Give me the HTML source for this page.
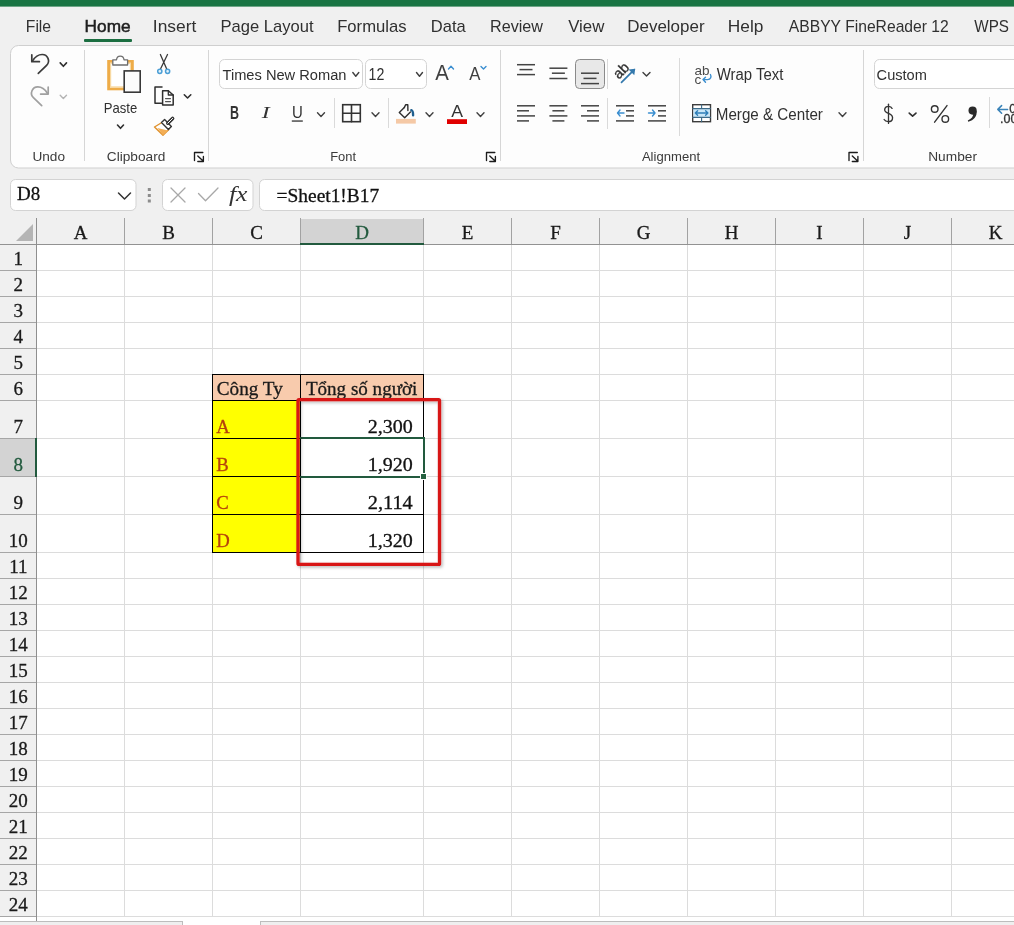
<!DOCTYPE html>
<html><head><meta charset="utf-8"><title>Excel</title>
<style>html,body{margin:0;padding:0;width:1014px;height:925px;overflow:hidden;background:#f0f0f0;}svg{display:block;will-change:transform}</style>
</head><body>
<svg width="1014" height="925" viewBox="0 0 1014 925" shape-rendering="geometricPrecision"><rect x="0" y="0" width="1014" height="925" fill="#f0f0f0" />
<rect x="0" y="0" width="1014" height="6.6" fill="#197443" />
<text x="25.8" y="32" font-family="'Liberation Sans', sans-serif" font-size="17" fill="#303030" font-weight="normal" font-style="normal" text-anchor="start" textLength="25.3" lengthAdjust="spacingAndGlyphs" >File</text>
<text x="84.6" y="32" font-family="'Liberation Sans', sans-serif" font-size="17" fill="#202020" font-weight="normal" font-style="normal" text-anchor="start" textLength="46" lengthAdjust="spacingAndGlyphs"  stroke="#202020" stroke-width="0.5">Home</text>
<text x="152.8" y="32" font-family="'Liberation Sans', sans-serif" font-size="17" fill="#303030" font-weight="normal" font-style="normal" text-anchor="start" textLength="43.5" lengthAdjust="spacingAndGlyphs" >Insert</text>
<text x="220.5" y="32" font-family="'Liberation Sans', sans-serif" font-size="17" fill="#303030" font-weight="normal" font-style="normal" text-anchor="start" textLength="93" lengthAdjust="spacingAndGlyphs" >Page Layout</text>
<text x="337.2" y="32" font-family="'Liberation Sans', sans-serif" font-size="17" fill="#303030" font-weight="normal" font-style="normal" text-anchor="start" textLength="69.4" lengthAdjust="spacingAndGlyphs" >Formulas</text>
<text x="430.8" y="32" font-family="'Liberation Sans', sans-serif" font-size="17" fill="#303030" font-weight="normal" font-style="normal" text-anchor="start" textLength="34.9" lengthAdjust="spacingAndGlyphs" >Data</text>
<text x="490" y="32" font-family="'Liberation Sans', sans-serif" font-size="17" fill="#303030" font-weight="normal" font-style="normal" text-anchor="start" textLength="53" lengthAdjust="spacingAndGlyphs" >Review</text>
<text x="568.2" y="32" font-family="'Liberation Sans', sans-serif" font-size="17" fill="#303030" font-weight="normal" font-style="normal" text-anchor="start" textLength="36.2" lengthAdjust="spacingAndGlyphs" >View</text>
<text x="627.2" y="32" font-family="'Liberation Sans', sans-serif" font-size="17" fill="#303030" font-weight="normal" font-style="normal" text-anchor="start" textLength="77.4" lengthAdjust="spacingAndGlyphs" >Developer</text>
<text x="727.8" y="32" font-family="'Liberation Sans', sans-serif" font-size="17" fill="#303030" font-weight="normal" font-style="normal" text-anchor="start" textLength="35.6" lengthAdjust="spacingAndGlyphs" >Help</text>
<text x="788.8" y="32" font-family="'Liberation Sans', sans-serif" font-size="17" fill="#303030" font-weight="normal" font-style="normal" text-anchor="start" textLength="160" lengthAdjust="spacingAndGlyphs" >ABBYY FineReader 12</text>
<text x="974.3" y="32" font-family="'Liberation Sans', sans-serif" font-size="17" fill="#303030" font-weight="normal" font-style="normal" text-anchor="start" textLength="34.7" lengthAdjust="spacingAndGlyphs" >WPS</text>
<rect x="84" y="39" width="48" height="3" fill="#1b6e41" rx="1"/>
<rect x="10.5" y="45.5" width="1020" height="122.5" rx="8" fill="#fdfdfd" stroke="#cfcfcf" stroke-width="1"/>
<rect x="84" y="50" width="1" height="111" fill="#d6d6d6"/>
<rect x="208" y="50" width="1" height="111" fill="#d6d6d6"/>
<rect x="500" y="50" width="1" height="111" fill="#d6d6d6"/>
<rect x="863" y="50" width="1" height="111" fill="#d6d6d6"/>
<rect x="334" y="98" width="1" height="30" fill="#dadada"/>
<rect x="388" y="98" width="1" height="30" fill="#dadada"/>
<rect x="607" y="59" width="1" height="30" fill="#dadada"/>
<rect x="607" y="98" width="1" height="31" fill="#dadada"/>
<rect x="679" y="58" width="1" height="78" fill="#dadada"/>
<rect x="989" y="97" width="1" height="31" fill="#dadada"/>
<text x="32.4" y="161" font-family="'Liberation Sans', sans-serif" font-size="13" fill="#3b3b3b" font-weight="normal" font-style="normal" text-anchor="start" textLength="32.6" lengthAdjust="spacingAndGlyphs" >Undo</text>
<text x="106.8" y="161" font-family="'Liberation Sans', sans-serif" font-size="13" fill="#3b3b3b" font-weight="normal" font-style="normal" text-anchor="start" textLength="58.5" lengthAdjust="spacingAndGlyphs" >Clipboard</text>
<text x="330.2" y="161" font-family="'Liberation Sans', sans-serif" font-size="13" fill="#3b3b3b" font-weight="normal" font-style="normal" text-anchor="start" textLength="25.9" lengthAdjust="spacingAndGlyphs" >Font</text>
<text x="641.9" y="161" font-family="'Liberation Sans', sans-serif" font-size="13" fill="#3b3b3b" font-weight="normal" font-style="normal" text-anchor="start" textLength="58.2" lengthAdjust="spacingAndGlyphs" >Alignment</text>
<text x="928.2" y="161" font-family="'Liberation Sans', sans-serif" font-size="13" fill="#3b3b3b" font-weight="normal" font-style="normal" text-anchor="start" textLength="48.8" lengthAdjust="spacingAndGlyphs" >Number</text>
<path d="M31.8 54.8 L31.8 61.7 L39.4 61.7" stroke="#3c3c3c" stroke-width="1.7" fill="none" stroke-linecap="round" stroke-linejoin="round" />
<path d="M32.6 60.9 C35 57, 38.5 54.5, 42.1 54.5 A6.3 6.3 0 0 1 46.6 65.3 L38.3 73.4" stroke="#3c3c3c" stroke-width="1.7" fill="none" stroke-linecap="round" stroke-linejoin="round" />
<path d="M60.2 62.9 L63.35 66.3 L66.5 62.9" stroke="#303030" stroke-width="1.6" fill="none" stroke-linecap="round" stroke-linejoin="round" />
<path d="M48.2 87.2 L48.2 94.1 L40.6 94.1" stroke="#a0a0a0" stroke-width="1.7" fill="none" stroke-linecap="round" stroke-linejoin="round" />
<path d="M47.4 93.3 C45 89.4, 41.5 86.9, 37.9 86.9 A6.3 6.3 0 0 0 33.4 97.7 L41.7 105.6" stroke="#a0a0a0" stroke-width="1.7" fill="none" stroke-linecap="round" stroke-linejoin="round" />
<path d="M60.2 95.2 L63.35 98.4 L66.5 95.2" stroke="#b4b4b4" stroke-width="1.4" fill="none" stroke-linecap="round" stroke-linejoin="round" />
<rect x="108.6" y="61.4" width="23.8" height="27.5" fill="#ffffff" stroke="#eeac48" stroke-width="2.8"/>
<rect x="110.6" y="63.4" width="19.8" height="23.5" fill="none" stroke="#f8d9a2" stroke-width="1.2"/>
<path d="M112.8 65 L112.8 59.8 L116.5 59.8 C117 54.8, 123.5 54.8, 124 59.8 L127.6 59.8 L127.6 65 Z" stroke="#6e6e6e" stroke-width="1.3" fill="#ffffff" stroke-linecap="round" stroke-linejoin="round" />
<rect x="124.2" y="70.9" width="16" height="21.3" fill="#fcfcfc" stroke="#383838" stroke-width="1.6"/>
<text x="103.8" y="112.8" font-family="'Liberation Sans', sans-serif" font-size="15" fill="#303030" font-weight="normal" font-style="normal" text-anchor="start" textLength="33.4" lengthAdjust="spacingAndGlyphs" >Paste</text>
<path d="M117.5 125 L120.5 128.3 L123.5 125" stroke="#303030" stroke-width="1.6" fill="none" stroke-linecap="round" stroke-linejoin="round" />
<path d="M160.4 54.5 L166.6 68.8 M167.5 54.5 L160.6 68.8" stroke="#3a3a3a" stroke-width="1.3" fill="none" stroke-linecap="round" stroke-linejoin="round" />
<circle cx="159.8" cy="71.3" r="2.1" fill="#e6f3fb" stroke="#4c9fd6" stroke-width="1.5"/>
<circle cx="167.6" cy="71.3" r="2.1" fill="#e6f3fb" stroke="#4c9fd6" stroke-width="1.5"/>
<path d="M162 87 L155 87 L155 103.2 L161.5 103.2" stroke="#2f2f2f" stroke-width="1.5" fill="none" stroke-linecap="round" stroke-linejoin="round" stroke-linejoin="miter"/>
<path d="M162.6 90.7 L168.3 90.7 L173.2 95 L173.2 105 L162.6 105 Z" stroke="#2f2f2f" stroke-width="1.5" fill="#ffffff" stroke-linecap="round" stroke-linejoin="round" />
<path d="M168.3 90.7 L168.3 95 L173.2 95" stroke="#2f2f2f" stroke-width="1.3" fill="none" stroke-linecap="round" stroke-linejoin="round" />
<path d="M165.5 98.6 L170.5 98.6 M165.5 101.6 L170.5 101.6" stroke="#555" stroke-width="1.1" fill="none" stroke-linecap="round" stroke-linejoin="round" />
<path d="M184.3 94.8 L187.55 98 L190.8 94.8" stroke="#303030" stroke-width="1.6" fill="none" stroke-linecap="round" stroke-linejoin="round" />
<path d="M154.5 127 L162.7 122 L168.8 129.6 L163 135.3 Z" stroke="#df912c" stroke-width="1.4" fill="#ffffff" stroke-linecap="round" stroke-linejoin="round" />
<path d="M157.3 128 L168.2 130.5 L163 135.3 Z" fill="#f3ae55"/>
<path d="M161.5 122.6 L164.6 119.6 L171.4 126.5 L168.4 129.5 Z" stroke="#353535" stroke-width="1.4" fill="#ffffff" stroke-linecap="round" stroke-linejoin="round" />
<path d="M167.8 123.2 L172.6 118.4" stroke="#353535" stroke-width="3.6" fill="none" stroke-linecap="round" stroke-linejoin="round" />
<path d="M167.8 123.2 L172.6 118.4" stroke="#ffffff" stroke-width="1.0" fill="none" stroke-linecap="round" stroke-linejoin="round" />
<path d="M194.5 160.6 L194.5 152.5 L202.8 152.5" stroke="#1c1c1c" stroke-width="1.35" fill="none" stroke-linecap="round" stroke-linejoin="round" />
<path d="M197.8 156.0 L203.4 161.3 M203.4 156.4 L203.4 161.5 L197.8 161.5" stroke="#1c1c1c" stroke-width="1.35" fill="none" stroke-linecap="round" stroke-linejoin="round" />
<path d="M486.5 160.6 L486.5 152.5 L494.8 152.5" stroke="#1c1c1c" stroke-width="1.35" fill="none" stroke-linecap="round" stroke-linejoin="round" />
<path d="M489.8 156.0 L495.4 161.3 M495.4 156.4 L495.4 161.5 L489.8 161.5" stroke="#1c1c1c" stroke-width="1.35" fill="none" stroke-linecap="round" stroke-linejoin="round" />
<path d="M849 160.6 L849 152.5 L857.3 152.5" stroke="#1c1c1c" stroke-width="1.35" fill="none" stroke-linecap="round" stroke-linejoin="round" />
<path d="M852.3 156.0 L857.9 161.3 M857.9 156.4 L857.9 161.5 L852.3 161.5" stroke="#1c1c1c" stroke-width="1.35" fill="none" stroke-linecap="round" stroke-linejoin="round" />
<rect x="219.5" y="59.5" width="143" height="29" rx="5" fill="#fff" stroke="#d4d4d4"/>
<rect x="365.5" y="59.5" width="61" height="29" rx="5" fill="#fff" stroke="#d4d4d4"/>
<text x="222.5" y="79.5" font-family="'Liberation Sans', sans-serif" font-size="15.3" fill="#303030" font-weight="normal" font-style="normal" text-anchor="start" textLength="124" lengthAdjust="spacingAndGlyphs" >Times New Roman</text>
<path d="M352.8 72.5 L355.8 76.3 L358.8 72.5" stroke="#404040" stroke-width="1.4" fill="none" stroke-linecap="round" stroke-linejoin="round" />
<text x="368.5" y="79.5" font-family="'Liberation Sans', sans-serif" font-size="15.6" fill="#303030" font-weight="normal" font-style="normal" text-anchor="start" textLength="15.8" lengthAdjust="spacingAndGlyphs" >12</text>
<path d="M416.5 72.5 L419.5 76.3 L422.5 72.5" stroke="#404040" stroke-width="1.4" fill="none" stroke-linecap="round" stroke-linejoin="round" />
<text x="435.2" y="79.7" font-family="'Liberation Sans', sans-serif" font-size="22.5" fill="#404040" font-weight="normal" font-style="normal" text-anchor="start" textLength="13.6" lengthAdjust="spacingAndGlyphs" >A</text>
<path d="M448.5 69 L451 66.2 L453.5 69" stroke="#3a8ed0" stroke-width="1.4" fill="none" stroke-linecap="round" stroke-linejoin="round" />
<text x="469.2" y="79.7" font-family="'Liberation Sans', sans-serif" font-size="17.5" fill="#404040" font-weight="normal" font-style="normal" text-anchor="start" textLength="11.2" lengthAdjust="spacingAndGlyphs" >A</text>
<path d="M481 66.5 L483.5 69 L486 66.5" stroke="#3a8ed0" stroke-width="1.4" fill="none" stroke-linecap="round" stroke-linejoin="round" />
<text x="229.9" y="118.8" font-family="'Liberation Sans', sans-serif" font-size="17.5" fill="#333" font-weight="bold" font-style="normal" text-anchor="start" textLength="9" lengthAdjust="spacingAndGlyphs" >B</text>
<text x="261.8" y="118.4" font-family="'Liberation Serif', serif" font-size="17" fill="#333" font-weight="normal" font-style="italic" text-anchor="start" textLength="7.9" lengthAdjust="spacingAndGlyphs" >I</text>
<text x="292" y="118.3" font-family="'Liberation Sans', sans-serif" font-size="16.5" fill="#333" font-weight="normal" font-style="normal" text-anchor="start" textLength="10.8" lengthAdjust="spacingAndGlyphs" >U</text>
<rect x="291.8" y="120.4" width="11.0" height="1.3" fill="#333"/>
<path d="M317.5 112.8 L321.0 116.5 L324.5 112.8" stroke="#404040" stroke-width="1.4" fill="none" stroke-linecap="round" stroke-linejoin="round" />
<rect x="342.7" y="104.7" width="17.6" height="17" fill="none" stroke="#333" stroke-width="1.6"/>
<path d="M351.5 104.7 L351.5 121.7 M342.7 113.2 L360.3 113.2" stroke="#333" stroke-width="1.6" fill="none" stroke-linecap="round" stroke-linejoin="round" stroke-linecap="butt"/>
<path d="M372 112.8 L375.5 116.5 L379 112.8" stroke="#404040" stroke-width="1.4" fill="none" stroke-linecap="round" stroke-linejoin="round" />
<path d="M404.3 107.6 L399.3 112.4 L404.7 117.7 L410.4 112" stroke="#2e2e2e" stroke-width="1.4" fill="none" stroke-linecap="round" stroke-linejoin="round" stroke-linejoin="miter"/>
<path d="M404.3 107.6 L405.6 104.7 L407.8 104.7 L407.9 110.6" stroke="#2e2e2e" stroke-width="1.4" fill="none" stroke-linecap="round" stroke-linejoin="round" />
<path d="M411.3 110.2 C412.7 110.6, 413.1 112, 413.1 115.3" stroke="#1f5f8f" stroke-width="2.4" fill="none" stroke-linecap="round" stroke-linejoin="round" />
<rect x="396" y="118.9" width="19.8" height="4.7" fill="#f5c9a6" />
<path d="M426 112.8 L429.5 116.5 L433 112.8" stroke="#404040" stroke-width="1.4" fill="none" stroke-linecap="round" stroke-linejoin="round" />
<text x="451.3" y="117.4" font-family="'Liberation Sans', sans-serif" font-size="16.5" fill="#333" font-weight="normal" font-style="normal" text-anchor="start" textLength="11.8" lengthAdjust="spacingAndGlyphs" >A</text>
<rect x="447" y="119.2" width="20" height="4.8" fill="#e00000" />
<path d="M477 112.8 L480.5 116.5 L484 112.8" stroke="#404040" stroke-width="1.4" fill="none" stroke-linecap="round" stroke-linejoin="round" />
<rect x="517" y="63.95" width="18" height="1.5" fill="#444"/>
<rect x="519.5" y="68.85" width="13.0" height="1.5" fill="#444"/>
<rect x="517" y="73.85" width="18" height="1.5" fill="#444"/>
<rect x="549.4" y="67.45" width="18.0" height="1.5" fill="#444"/>
<rect x="551.9" y="72.45" width="13.0" height="1.5" fill="#444"/>
<rect x="549.4" y="77.75" width="18.0" height="1.5" fill="#444"/>
<rect x="575.5" y="59.5" width="29" height="29" rx="4" fill="#e8e8e8" stroke="#8a8a8a"/>
<rect x="581" y="72.45" width="18" height="1.5" fill="#444"/>
<rect x="583.5" y="77.65" width="13.0" height="1.5" fill="#444"/>
<rect x="581" y="82.85" width="18" height="1.5" fill="#444"/>
<g transform="translate(620.8 70.3) rotate(-45)"><text x="0" y="5.2" font-family="Liberation Sans" font-size="14.5" fill="#333" stroke="#333" stroke-width="0.35" text-anchor="middle">ab</text></g>
<path d="M621.5 82.3 L634.3 69.6" stroke="#3479ad" stroke-width="1.7" fill="none" stroke-linecap="round" stroke-linejoin="round" />
<path d="M635.2 68.7 L628.6 69.6 L634.3 75.3 Z" fill="#3479ad"/>
<path d="M643 72.5 L646.5 76.1 L650 72.5" stroke="#404040" stroke-width="1.4" fill="none" stroke-linecap="round" stroke-linejoin="round" />
<rect x="517" y="105.05" width="18" height="1.5" fill="#444"/>
<rect x="517" y="110.05" width="12" height="1.5" fill="#444"/>
<rect x="517" y="115.15" width="18" height="1.5" fill="#444"/>
<rect x="517" y="120.15" width="12" height="1.5" fill="#444"/>
<rect x="549.4" y="105.05" width="18.0" height="1.5" fill="#444"/>
<rect x="552.4" y="110.05" width="12.0" height="1.5" fill="#444"/>
<rect x="549.4" y="115.15" width="18.0" height="1.5" fill="#444"/>
<rect x="552.4" y="120.15" width="12.0" height="1.5" fill="#444"/>
<rect x="581" y="105.05" width="18" height="1.5" fill="#444"/>
<rect x="587" y="110.05" width="12" height="1.5" fill="#444"/>
<rect x="581" y="115.15" width="18" height="1.5" fill="#444"/>
<rect x="587" y="120.15" width="12" height="1.5" fill="#444"/>
<rect x="616" y="105.05" width="18" height="1.5" fill="#444"/>
<rect x="626" y="110.05" width="8" height="1.5" fill="#444"/>
<rect x="626" y="115.15" width="8" height="1.5" fill="#444"/>
<rect x="616" y="120.15" width="18" height="1.5" fill="#444"/>
<path d="M617.5 113 L624 113 M620 110 L617.5 113 L620 116" stroke="#3a8ed0" stroke-width="1.4" fill="none" stroke-linecap="round" stroke-linejoin="round" />
<rect x="648" y="105.05" width="18" height="1.5" fill="#444"/>
<rect x="658" y="110.05" width="8" height="1.5" fill="#444"/>
<rect x="658" y="115.15" width="8" height="1.5" fill="#444"/>
<rect x="648" y="120.15" width="18" height="1.5" fill="#444"/>
<path d="M648.5 113 L655 113 M652.5 110 L655 113 L652.5 116" stroke="#3a8ed0" stroke-width="1.4" fill="none" stroke-linecap="round" stroke-linejoin="round" />
<text x="694.6" y="74.6" font-family="'Liberation Sans', sans-serif" font-size="13.5" fill="#4a4a4a" font-weight="normal" font-style="normal" text-anchor="start" >ab</text>
<text x="694.6" y="83.6" font-family="'Liberation Sans', sans-serif" font-size="13.5" fill="#4a4a4a" font-weight="normal" font-style="normal" text-anchor="start" >c</text>
<path d="M703 79.6 L707.5 79.6 C711 79.6 711.6 76.5 710.4 74.5 M705.5 77.2 L703 79.6 L705.5 82.2" stroke="#3a8ed0" stroke-width="1.4" fill="none" stroke-linecap="round" stroke-linejoin="round" />
<text x="716.7" y="80" font-family="'Liberation Sans', sans-serif" font-size="15.6" fill="#303030" font-weight="normal" font-style="normal" text-anchor="start" textLength="66.7" lengthAdjust="spacingAndGlyphs" >Wrap Text</text>
<rect x="692.7" y="104.7" width="17.8" height="17" fill="#ffffff" stroke="#3c3c3c" stroke-width="1.4"/>
<rect x="693.4" y="108.6" width="16.4" height="8.8" fill="#c9e7f8" />
<path d="M692.7 108.6 L710.5 108.6 M692.7 117.4 L710.5 117.4 M701.6 104.7 L701.6 108.6 M701.6 117.4 L701.6 121.7" stroke="#3c6a88" stroke-width="1.1" fill="none" stroke-linecap="round" stroke-linejoin="round" stroke-linecap="butt"/>
<path d="M695.3 113 L707.9 113 M697.6 110.7 L695.3 113 L697.6 115.3 M705.6 110.7 L707.9 113 L705.6 115.3" stroke="#2f7fb8" stroke-width="1.4" fill="none" stroke-linecap="round" stroke-linejoin="round" />
<text x="715.8" y="120.4" font-family="'Liberation Sans', sans-serif" font-size="15.6" fill="#303030" font-weight="normal" font-style="normal" text-anchor="start" textLength="107.1" lengthAdjust="spacingAndGlyphs" >Merge &amp; Center</text>
<path d="M839 112.8 L842.5 116.5 L846 112.8" stroke="#404040" stroke-width="1.4" fill="none" stroke-linecap="round" stroke-linejoin="round" />
<rect x="874.5" y="59.5" width="200" height="29" rx="5" fill="#fff" stroke="#d4d4d4"/>
<text x="876.6" y="80" font-family="'Liberation Sans', sans-serif" font-size="15.5" fill="#303030" font-weight="normal" font-style="normal" text-anchor="start" textLength="50.3" lengthAdjust="spacingAndGlyphs" >Custom</text>
<path d="M892.1 108.4 C891 105.9, 886.2 105.5, 884.9 108.4 C883.7 111.4, 886.6 112.6, 888.6 113.4 C891.5 114.5, 893.2 116.1, 892.4 119.2 C891.4 122.4, 885.6 122.3, 884.1 119.5" stroke="#333" stroke-width="1.35" fill="none" stroke-linecap="round" stroke-linejoin="round" />
<path d="M888.5 104.2 L888.5 123.4" stroke="#333" stroke-width="1.3" fill="none" stroke-linecap="round" stroke-linejoin="round" />
<path d="M909.2 113.1 L912.6 116.2 L916 113.1" stroke="#303030" stroke-width="1.6" fill="none" stroke-linecap="round" stroke-linejoin="round" />
<circle cx="934.7" cy="109" r="3.3" fill="none" stroke="#333" stroke-width="1.4"/>
<circle cx="945.3" cy="118.9" r="3.3" fill="none" stroke="#333" stroke-width="1.4"/>
<path d="M947 105.6 L934.6 122.2" stroke="#333" stroke-width="1.4" fill="none" stroke-linecap="round" stroke-linejoin="round" />
<circle cx="972.6" cy="110.6" r="4.1" fill="#2a2a2a"/>
<path d="M976.6 110.8 C977.2 116.5, 974 120.2, 968.2 121.8 L967.8 120.6 C971.6 118.8, 973.4 116.2, 973.2 113.5 Z" fill="#2a2a2a"/>
<path d="M998 109.4 L1007.6 109.4 M1001.6 105.6 L997.8 109.4 L1001.6 113.2" stroke="#3a83b8" stroke-width="1.5" fill="none" stroke-linecap="round" stroke-linejoin="round" />
<text x="1009.3" y="112.8" font-family="'Liberation Sans', sans-serif" font-size="12.5" fill="#333" font-weight="normal" font-style="normal" text-anchor="start"  stroke="#333" stroke-width="0.3">0</text>
<text x="1000" y="122.7" font-family="'Liberation Sans', sans-serif" font-size="12.5" fill="#333" font-weight="normal" font-style="normal" text-anchor="start"  stroke="#333" stroke-width="0.3">.00</text>
<rect x="10.5" y="179.5" width="125.5" height="31" rx="5" fill="#fff" stroke="#d3d3d3"/>
<text x="17" y="200" font-family="'Liberation Serif', serif" font-size="19.5" fill="#111" font-weight="normal" font-style="normal" text-anchor="start" textLength="23.2" lengthAdjust="spacingAndGlyphs"  stroke="#111" stroke-width="0.3">D8</text>
<path d="M118.5 193 L124.5 199 L130.5 193" stroke="#333" stroke-width="1.5" fill="none" stroke-linecap="round" stroke-linejoin="round" />
<rect x="147.8" y="188.0" width="3" height="3" fill="#8c8c8c" />
<rect x="147.8" y="194.0" width="3" height="3" fill="#8c8c8c" />
<rect x="147.8" y="199.5" width="3" height="3" fill="#8c8c8c" />
<rect x="162.5" y="179.5" width="90.5" height="31" rx="5" fill="#fff" stroke="#d3d3d3"/>
<path d="M171 188 L185 202 M185 188 L171 202" stroke="#a8a8a8" stroke-width="1.3" fill="none" stroke-linecap="round" stroke-linejoin="round" />
<path d="M198.5 193.5 L205.5 200.8 L218 188" stroke="#a8a8a8" stroke-width="1.3" fill="none" stroke-linecap="round" stroke-linejoin="round" />
<text x="229" y="201" font-family="'Liberation Serif', serif" font-size="20" fill="#333" font-weight="normal" font-style="italic" text-anchor="start" textLength="18.5" lengthAdjust="spacingAndGlyphs" >fx</text>
<rect x="259.5" y="179.5" width="800" height="31" rx="5" fill="#fff" stroke="#d3d3d3"/>
<text x="276.6" y="201.6" font-family="'Liberation Serif', serif" font-size="19.5" fill="#111" font-weight="normal" font-style="normal" text-anchor="start" textLength="102.6" lengthAdjust="spacingAndGlyphs"  stroke="#111" stroke-width="0.3">=Sheet1!B17</text>
<rect x="37" y="245" width="977" height="671" fill="#ffffff" />
<rect x="0" y="219" width="1014" height="25" fill="#f0f0f0" />
<rect x="0" y="245" width="36" height="671" fill="#f0f0f0" />
<rect x="300" y="219" width="123" height="25" fill="#d3d3d3" />
<rect x="0" y="439" width="36" height="37" fill="#d3d3d3" />
<rect x="124" y="245" width="1" height="671" fill="#dcdcdc"/>
<rect x="212" y="245" width="1" height="671" fill="#dcdcdc"/>
<rect x="300" y="245" width="1" height="671" fill="#dcdcdc"/>
<rect x="423" y="245" width="1" height="671" fill="#dcdcdc"/>
<rect x="511" y="245" width="1" height="671" fill="#dcdcdc"/>
<rect x="599" y="245" width="1" height="671" fill="#dcdcdc"/>
<rect x="687" y="245" width="1" height="671" fill="#dcdcdc"/>
<rect x="775" y="245" width="1" height="671" fill="#dcdcdc"/>
<rect x="863" y="245" width="1" height="671" fill="#dcdcdc"/>
<rect x="951" y="245" width="1" height="671" fill="#dcdcdc"/>
<rect x="1039" y="245" width="1" height="671" fill="#dcdcdc"/>
<rect x="37" y="270" width="977" height="1" fill="#dcdcdc"/>
<rect x="37" y="296" width="977" height="1" fill="#dcdcdc"/>
<rect x="37" y="322" width="977" height="1" fill="#dcdcdc"/>
<rect x="37" y="348" width="977" height="1" fill="#dcdcdc"/>
<rect x="37" y="374" width="977" height="1" fill="#dcdcdc"/>
<rect x="37" y="400" width="977" height="1" fill="#dcdcdc"/>
<rect x="37" y="438" width="977" height="1" fill="#dcdcdc"/>
<rect x="37" y="476" width="977" height="1" fill="#dcdcdc"/>
<rect x="37" y="514" width="977" height="1" fill="#dcdcdc"/>
<rect x="37" y="552" width="977" height="1" fill="#dcdcdc"/>
<rect x="37" y="578" width="977" height="1" fill="#dcdcdc"/>
<rect x="37" y="604" width="977" height="1" fill="#dcdcdc"/>
<rect x="37" y="630" width="977" height="1" fill="#dcdcdc"/>
<rect x="37" y="656" width="977" height="1" fill="#dcdcdc"/>
<rect x="37" y="682" width="977" height="1" fill="#dcdcdc"/>
<rect x="37" y="708" width="977" height="1" fill="#dcdcdc"/>
<rect x="37" y="734" width="977" height="1" fill="#dcdcdc"/>
<rect x="37" y="760" width="977" height="1" fill="#dcdcdc"/>
<rect x="37" y="786" width="977" height="1" fill="#dcdcdc"/>
<rect x="37" y="812" width="977" height="1" fill="#dcdcdc"/>
<rect x="37" y="838" width="977" height="1" fill="#dcdcdc"/>
<rect x="37" y="864" width="977" height="1" fill="#dcdcdc"/>
<rect x="37" y="890" width="977" height="1" fill="#dcdcdc"/>
<rect x="37" y="916" width="977" height="1" fill="#dcdcdc"/>
<rect x="124" y="218" width="1" height="26" fill="#a2a2a2"/>
<rect x="212" y="218" width="1" height="26" fill="#a2a2a2"/>
<rect x="300" y="218" width="1" height="26" fill="#a2a2a2"/>
<rect x="423" y="218" width="1" height="26" fill="#a2a2a2"/>
<rect x="511" y="218" width="1" height="26" fill="#a2a2a2"/>
<rect x="599" y="218" width="1" height="26" fill="#a2a2a2"/>
<rect x="687" y="218" width="1" height="26" fill="#a2a2a2"/>
<rect x="775" y="218" width="1" height="26" fill="#a2a2a2"/>
<rect x="863" y="218" width="1" height="26" fill="#a2a2a2"/>
<rect x="951" y="218" width="1" height="26" fill="#a2a2a2"/>
<rect x="1039" y="218" width="1" height="26" fill="#a2a2a2"/>
<rect x="0" y="270" width="36" height="1" fill="#a6a6a6"/>
<rect x="0" y="296" width="36" height="1" fill="#a6a6a6"/>
<rect x="0" y="322" width="36" height="1" fill="#a6a6a6"/>
<rect x="0" y="348" width="36" height="1" fill="#a6a6a6"/>
<rect x="0" y="374" width="36" height="1" fill="#a6a6a6"/>
<rect x="0" y="400" width="36" height="1" fill="#a6a6a6"/>
<rect x="0" y="438" width="36" height="1" fill="#a6a6a6"/>
<rect x="0" y="476" width="36" height="1" fill="#a6a6a6"/>
<rect x="0" y="514" width="36" height="1" fill="#a6a6a6"/>
<rect x="0" y="552" width="36" height="1" fill="#a6a6a6"/>
<rect x="0" y="578" width="36" height="1" fill="#a6a6a6"/>
<rect x="0" y="604" width="36" height="1" fill="#a6a6a6"/>
<rect x="0" y="630" width="36" height="1" fill="#a6a6a6"/>
<rect x="0" y="656" width="36" height="1" fill="#a6a6a6"/>
<rect x="0" y="682" width="36" height="1" fill="#a6a6a6"/>
<rect x="0" y="708" width="36" height="1" fill="#a6a6a6"/>
<rect x="0" y="734" width="36" height="1" fill="#a6a6a6"/>
<rect x="0" y="760" width="36" height="1" fill="#a6a6a6"/>
<rect x="0" y="786" width="36" height="1" fill="#a6a6a6"/>
<rect x="0" y="812" width="36" height="1" fill="#a6a6a6"/>
<rect x="0" y="838" width="36" height="1" fill="#a6a6a6"/>
<rect x="0" y="864" width="36" height="1" fill="#a6a6a6"/>
<rect x="0" y="890" width="36" height="1" fill="#a6a6a6"/>
<rect x="0" y="916" width="36" height="1" fill="#a6a6a6"/>
<rect x="0" y="244" width="1014" height="1" fill="#929292"/>
<rect x="36" y="218" width="1" height="698" fill="#8f8f8f"/>
<path d="M16 241 L33 241 L33 224 Z" fill="#b5b5b5"/>
<text x="80.5" y="238.7" font-family="'Liberation Serif', serif" font-size="19" fill="#1a1a1a" font-weight="normal" font-style="normal" text-anchor="middle"  stroke="#1a1a1a" stroke-width="0.3">A</text>
<text x="168.5" y="238.7" font-family="'Liberation Serif', serif" font-size="19" fill="#1a1a1a" font-weight="normal" font-style="normal" text-anchor="middle"  stroke="#1a1a1a" stroke-width="0.3">B</text>
<text x="256.5" y="238.7" font-family="'Liberation Serif', serif" font-size="19" fill="#1a1a1a" font-weight="normal" font-style="normal" text-anchor="middle"  stroke="#1a1a1a" stroke-width="0.3">C</text>
<text x="362.0" y="238.7" font-family="'Liberation Serif', serif" font-size="19" fill="#225a3e" font-weight="normal" font-style="normal" text-anchor="middle"  stroke="#225a3e" stroke-width="0.3">D</text>
<text x="467.5" y="238.7" font-family="'Liberation Serif', serif" font-size="19" fill="#1a1a1a" font-weight="normal" font-style="normal" text-anchor="middle"  stroke="#1a1a1a" stroke-width="0.3">E</text>
<text x="555.5" y="238.7" font-family="'Liberation Serif', serif" font-size="19" fill="#1a1a1a" font-weight="normal" font-style="normal" text-anchor="middle"  stroke="#1a1a1a" stroke-width="0.3">F</text>
<text x="643.5" y="238.7" font-family="'Liberation Serif', serif" font-size="19" fill="#1a1a1a" font-weight="normal" font-style="normal" text-anchor="middle"  stroke="#1a1a1a" stroke-width="0.3">G</text>
<text x="731.5" y="238.7" font-family="'Liberation Serif', serif" font-size="19" fill="#1a1a1a" font-weight="normal" font-style="normal" text-anchor="middle"  stroke="#1a1a1a" stroke-width="0.3">H</text>
<text x="819.5" y="238.7" font-family="'Liberation Serif', serif" font-size="19" fill="#1a1a1a" font-weight="normal" font-style="normal" text-anchor="middle"  stroke="#1a1a1a" stroke-width="0.3">I</text>
<text x="907.5" y="238.7" font-family="'Liberation Serif', serif" font-size="19" fill="#1a1a1a" font-weight="normal" font-style="normal" text-anchor="middle"  stroke="#1a1a1a" stroke-width="0.3">J</text>
<text x="995.5" y="238.7" font-family="'Liberation Serif', serif" font-size="19" fill="#1a1a1a" font-weight="normal" font-style="normal" text-anchor="middle"  stroke="#1a1a1a" stroke-width="0.3">K</text>
<rect x="300" y="243" width="124" height="2" fill="#225a3e"/>
<text x="18.3" y="265.3" font-family="'Liberation Serif', serif" font-size="19" fill="#1a1a1a" font-weight="normal" font-style="normal" text-anchor="middle"  stroke="#1a1a1a" stroke-width="0.3">1</text>
<text x="18.3" y="291.3" font-family="'Liberation Serif', serif" font-size="19" fill="#1a1a1a" font-weight="normal" font-style="normal" text-anchor="middle"  stroke="#1a1a1a" stroke-width="0.3">2</text>
<text x="18.3" y="317.3" font-family="'Liberation Serif', serif" font-size="19" fill="#1a1a1a" font-weight="normal" font-style="normal" text-anchor="middle"  stroke="#1a1a1a" stroke-width="0.3">3</text>
<text x="18.3" y="343.3" font-family="'Liberation Serif', serif" font-size="19" fill="#1a1a1a" font-weight="normal" font-style="normal" text-anchor="middle"  stroke="#1a1a1a" stroke-width="0.3">4</text>
<text x="18.3" y="369.3" font-family="'Liberation Serif', serif" font-size="19" fill="#1a1a1a" font-weight="normal" font-style="normal" text-anchor="middle"  stroke="#1a1a1a" stroke-width="0.3">5</text>
<text x="18.3" y="395.3" font-family="'Liberation Serif', serif" font-size="19" fill="#1a1a1a" font-weight="normal" font-style="normal" text-anchor="middle"  stroke="#1a1a1a" stroke-width="0.3">6</text>
<text x="18.3" y="433.3" font-family="'Liberation Serif', serif" font-size="19" fill="#1a1a1a" font-weight="normal" font-style="normal" text-anchor="middle"  stroke="#1a1a1a" stroke-width="0.3">7</text>
<text x="18.3" y="471.3" font-family="'Liberation Serif', serif" font-size="19" fill="#225a3e" font-weight="normal" font-style="normal" text-anchor="middle"  stroke="#225a3e" stroke-width="0.3">8</text>
<text x="18.3" y="509.3" font-family="'Liberation Serif', serif" font-size="19" fill="#1a1a1a" font-weight="normal" font-style="normal" text-anchor="middle"  stroke="#1a1a1a" stroke-width="0.3">9</text>
<text x="18.3" y="547.3" font-family="'Liberation Serif', serif" font-size="19" fill="#1a1a1a" font-weight="normal" font-style="normal" text-anchor="middle"  stroke="#1a1a1a" stroke-width="0.3">10</text>
<text x="18.3" y="573.3" font-family="'Liberation Serif', serif" font-size="19" fill="#1a1a1a" font-weight="normal" font-style="normal" text-anchor="middle"  stroke="#1a1a1a" stroke-width="0.3">11</text>
<text x="18.3" y="599.3" font-family="'Liberation Serif', serif" font-size="19" fill="#1a1a1a" font-weight="normal" font-style="normal" text-anchor="middle"  stroke="#1a1a1a" stroke-width="0.3">12</text>
<text x="18.3" y="625.3" font-family="'Liberation Serif', serif" font-size="19" fill="#1a1a1a" font-weight="normal" font-style="normal" text-anchor="middle"  stroke="#1a1a1a" stroke-width="0.3">13</text>
<text x="18.3" y="651.3" font-family="'Liberation Serif', serif" font-size="19" fill="#1a1a1a" font-weight="normal" font-style="normal" text-anchor="middle"  stroke="#1a1a1a" stroke-width="0.3">14</text>
<text x="18.3" y="677.3" font-family="'Liberation Serif', serif" font-size="19" fill="#1a1a1a" font-weight="normal" font-style="normal" text-anchor="middle"  stroke="#1a1a1a" stroke-width="0.3">15</text>
<text x="18.3" y="703.3" font-family="'Liberation Serif', serif" font-size="19" fill="#1a1a1a" font-weight="normal" font-style="normal" text-anchor="middle"  stroke="#1a1a1a" stroke-width="0.3">16</text>
<text x="18.3" y="729.3" font-family="'Liberation Serif', serif" font-size="19" fill="#1a1a1a" font-weight="normal" font-style="normal" text-anchor="middle"  stroke="#1a1a1a" stroke-width="0.3">17</text>
<text x="18.3" y="755.3" font-family="'Liberation Serif', serif" font-size="19" fill="#1a1a1a" font-weight="normal" font-style="normal" text-anchor="middle"  stroke="#1a1a1a" stroke-width="0.3">18</text>
<text x="18.3" y="781.3" font-family="'Liberation Serif', serif" font-size="19" fill="#1a1a1a" font-weight="normal" font-style="normal" text-anchor="middle"  stroke="#1a1a1a" stroke-width="0.3">19</text>
<text x="18.3" y="807.3" font-family="'Liberation Serif', serif" font-size="19" fill="#1a1a1a" font-weight="normal" font-style="normal" text-anchor="middle"  stroke="#1a1a1a" stroke-width="0.3">20</text>
<text x="18.3" y="833.3" font-family="'Liberation Serif', serif" font-size="19" fill="#1a1a1a" font-weight="normal" font-style="normal" text-anchor="middle"  stroke="#1a1a1a" stroke-width="0.3">21</text>
<text x="18.3" y="859.3" font-family="'Liberation Serif', serif" font-size="19" fill="#1a1a1a" font-weight="normal" font-style="normal" text-anchor="middle"  stroke="#1a1a1a" stroke-width="0.3">22</text>
<text x="18.3" y="885.3" font-family="'Liberation Serif', serif" font-size="19" fill="#1a1a1a" font-weight="normal" font-style="normal" text-anchor="middle"  stroke="#1a1a1a" stroke-width="0.3">23</text>
<text x="18.3" y="911.3" font-family="'Liberation Serif', serif" font-size="19" fill="#1a1a1a" font-weight="normal" font-style="normal" text-anchor="middle"  stroke="#1a1a1a" stroke-width="0.3">24</text>
<rect x="35" y="438" width="2" height="39" fill="#225a3e"/>
<rect x="212" y="374" width="211" height="26" fill="#f8cbad" />
<rect x="212" y="400" width="88" height="152" fill="#ffff00" />
<rect x="301" y="401" width="122" height="151" fill="#ffffff" />
<rect x="212" y="374" width="212" height="1" fill="#000"/>
<rect x="212" y="400" width="212" height="1" fill="#000"/>
<rect x="212" y="438" width="212" height="1" fill="#000"/>
<rect x="212" y="476" width="212" height="1" fill="#000"/>
<rect x="212" y="514" width="212" height="1" fill="#000"/>
<rect x="212" y="552" width="212" height="1" fill="#000"/>
<rect x="212" y="374" width="1" height="179" fill="#000"/>
<rect x="300" y="374" width="1" height="179" fill="#000"/>
<rect x="423" y="374" width="1" height="179" fill="#000"/>
<text x="216.8" y="394.6" font-family="'Liberation Serif', serif" font-size="18.7" fill="#1a1a1a" font-weight="normal" font-style="normal" text-anchor="start" textLength="66" lengthAdjust="spacingAndGlyphs"  stroke="#1a1a1a" stroke-width="0.3">Công Ty</text>
<text x="305.9" y="394.6" font-family="'Liberation Serif', serif" font-size="18.7" fill="#1a1a1a" font-weight="normal" font-style="normal" text-anchor="start" textLength="111.5" lengthAdjust="spacingAndGlyphs"  stroke="#1a1a1a" stroke-width="0.3">Tổng số người</text>
<text x="216.3" y="433" font-family="'Liberation Serif', serif" font-size="18.7" fill="#b5420c" font-weight="normal" font-style="normal" text-anchor="start"  stroke="#b5420c" stroke-width="0.3">A</text>
<text x="412.8" y="433.2" font-family="'Liberation Serif', serif" font-size="19.3" fill="#111" font-weight="normal" font-style="normal" text-anchor="end" textLength="45" lengthAdjust="spacingAndGlyphs"  stroke="#111" stroke-width="0.3">2,300</text>
<text x="216.3" y="471" font-family="'Liberation Serif', serif" font-size="18.7" fill="#b5420c" font-weight="normal" font-style="normal" text-anchor="start"  stroke="#b5420c" stroke-width="0.3">B</text>
<text x="412.8" y="471.2" font-family="'Liberation Serif', serif" font-size="19.3" fill="#111" font-weight="normal" font-style="normal" text-anchor="end" textLength="45" lengthAdjust="spacingAndGlyphs"  stroke="#111" stroke-width="0.3">1,920</text>
<text x="216.3" y="509" font-family="'Liberation Serif', serif" font-size="18.7" fill="#b5420c" font-weight="normal" font-style="normal" text-anchor="start"  stroke="#b5420c" stroke-width="0.3">C</text>
<text x="412.8" y="509.2" font-family="'Liberation Serif', serif" font-size="19.3" fill="#111" font-weight="normal" font-style="normal" text-anchor="end" textLength="45" lengthAdjust="spacingAndGlyphs"  stroke="#111" stroke-width="0.3">2,114</text>
<text x="216.3" y="547" font-family="'Liberation Serif', serif" font-size="18.7" fill="#b5420c" font-weight="normal" font-style="normal" text-anchor="start"  stroke="#b5420c" stroke-width="0.3">D</text>
<text x="412.8" y="547.2" font-family="'Liberation Serif', serif" font-size="19.3" fill="#111" font-weight="normal" font-style="normal" text-anchor="end" textLength="45" lengthAdjust="spacingAndGlyphs"  stroke="#111" stroke-width="0.3">1,320</text>
<rect x="300" y="437" width="124" height="2" fill="#225a3e"/>
<rect x="423" y="437" width="2" height="40" fill="#225a3e"/>
<rect x="300" y="476" width="124" height="2" fill="#225a3e"/>
<rect x="420" y="473" width="7" height="7" fill="#ffffff" />
<rect x="421" y="474" width="5" height="5" fill="#24613f" />
<defs><filter id="sh" x="-10%" y="-10%" width="120%" height="120%"><feDropShadow dx="1.5" dy="1.5" stdDeviation="1.5" flood-color="#000" flood-opacity="0.28"/></filter></defs>
<rect x="298" y="399.6" width="141.5" height="164.8" fill="none" stroke="#d81616" stroke-width="3.3" rx="1" filter="url(#sh)"/>
<rect x="0" y="917" width="1014" height="8" fill="#ffffff" />
<rect x="0" y="921" width="182" height="4" fill="#efefef" />
<rect x="0" y="921" width="183" height="1" fill="#bdbdbd"/>
<rect x="182" y="921" width="1" height="4" fill="#bdbdbd"/>
<rect x="260" y="921" width="754" height="4" fill="#efefef" />
<rect x="260" y="921" width="754" height="1" fill="#bdbdbd"/>
<rect x="260" y="921" width="1" height="4" fill="#bdbdbd"/>
<rect x="36" y="916" width="1" height="5" fill="#8f8f8f"/></svg>
</body></html>
